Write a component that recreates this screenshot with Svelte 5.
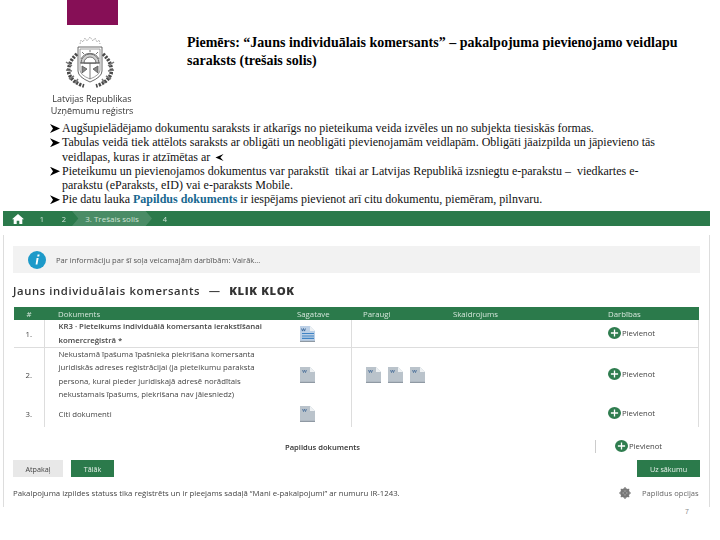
<script>
  const bullets = [
    { lines: ["Augšupielādējamo dokumentu saraksts ir atkarīgs no pieteikuma veida izvēles un no subjekta tiesiskās formas."] },
    { lines: ["Tabulas veidā tiek attēlots saraksts ar obligāti un neobligāti pievienojamām veidlapām. Obligāti jāaizpilda un jāpievieno tās", "veidlapas, kuras ir atzīmētas ar"], mark: true },
    { lines: ["Pieteikumu un pievienojamos dokumentus var parakstīt  tikai ar Latvijas Republikā izsniegtu e-parakstu –  viedkartes e-", "parakstu (eParaksts, eID) vai e-paraksts Mobile."] }
  ];

  const rows = [
    { n: "1.", doc: ["KR3 · Pieteikums individuālā komersanta ierakstīšanai", "komercreģistrā *"], bold: true, tpl: "blue", samples: 0 },
    { n: "2.", doc: ["Nekustamā īpašuma īpašnieka piekrišana komersanta", "juridiskās adreses reģistrācijai (ja pieteikumu paraksta", "persona, kurai pieder juridiskajā adresē norādītais", "nekustamais īpašums, piekrišana nav jāiesniedz)"], tpl: "gray", samples: 3 },
    { n: "3.", doc: ["Citi dokumenti"], tpl: "gray", samples: 0 }
  ];
</script>

{#snippet fileIcon(kind)}
  <svg class="file" viewBox="0 0 15 16">
    <path d="M0 0h10l5 5v11H0z" fill={kind === "blue" ? "#bcd0e6" : "#bac3cb"} />
    <path d="M10 0l5 5h-5z" fill="#eef1f3" />
    <path d="M0 15.4h15" stroke="#8f99a3" stroke-width="1.2" />
    {#if kind === "blue"}
      <path d="M2 7h12v1.1H2zM2 9.4h12v1.1H2zM2 11.8h12v1.1H2z" fill="#3f83c4" />
      <path d="M1.5 2.5l1 2.6 1-2.6 1 2.6 1-2.6" stroke="#2f5f94" fill="none" stroke-width=".8" />
    {:else}
      <path d="M2.5 3l1 2.6 1-2.6 1 2.6 1-2.6" stroke="#4a6f99" fill="none" stroke-width=".8" />
    {/if}
  </svg>
{/snippet}

{#snippet add()}
  <span class="add">
    <svg viewBox="0 0 13 12" width="13" height="12">
      <ellipse cx="6.5" cy="6" rx="6.5" ry="6" fill="#2f7d4f" />
      <path d="M6.5 2.4v7.2M2.9 6h7.2" stroke="#fff" stroke-width="1.3" />
    </svg>
    Pievienot
  </span>
{/snippet}

<div class="slide">
  <header>
    <div class="brand">
      <div class="tab"></div>
      <svg class="crest" viewBox="0 0 52 52" fill="none" stroke="#555" stroke-width=".8">
        <path d="M15 8l1-4 2 2 2-4 2 3 3-4 3 4 2-3 2 4 2-2 1 4" stroke="#999" stroke-dasharray="1.6 1" />
        <path d="M13 11h24v24q0 6-12 11q-12-5-12-11z" stroke="#444" />
        <path d="M15 13h20v21q0 5-10 9q-10-4-10-9z" stroke="#888" />
        <path d="M16 27a9 9 0 0 1 18 0z" fill="#cfcfcf" />
        <path d="M19 27a6 6 0 0 1 12 0z" fill="#fff" />
        <path d="M16 23a10 10 0 0 1 18 0M25 16v-2M19 18l-2-2M31 18l2-2" />
        <path d="M25 27v16M15 27h20" />
        <path d="M17 30l5 3-5 4zM33 30l-5 3 5 4z" fill="#888" />
        <path d="M12 18q-10 9-8 20q4 9 15 12M38 18q10 9 8 20q-4 9-15 12" stroke="#4a4a4a" stroke-width="3.6" stroke-dasharray="2.2 1.2" />
        <path d="M1 26l6 4M1 34l6 1M4 43l5-3M10 47l3-4M49 26l-6 4M49 34l-6 1M46 43l-5-3M40 47l-3-4" stroke="#777" stroke-width="1.5" />
      </svg>
      <div class="org">Latvijas Republikas<br />Uzņēmumu reģistrs</div>
    </div>
    <h1>Piemērs: “Jauns individuālais komersants” – pakalpojuma pievienojamo veidlapu saraksts (trešais solis)</h1>
  </header>

  <ul>
    {#each bullets as b}
      <li>
        {#each b.lines as line, i}
          <span class="line">{line}{#if b.mark && i === b.lines.length - 1}<svg class="mark" viewBox="0 0 10 9"><path d="M9.5 0.5L0.5 4.5l9 4-3.5-4z" fill="#000" /></svg>{/if}</span>
        {/each}
      </li>
    {/each}
    <li><span class="line">Pie datu lauka <b>Papildus dokuments</b> ir iespējams pievienot arī citu dokumentu, piemēram, pilnvaru.</span></li>
  </ul>

  <div class="app">
    <nav>
      <svg viewBox="0 0 12 10" width="12" height="10"><path d="M6 0L0 5.2h1.7V10h3V6.8h2.6V10h3V5.2H12z" fill="#fff" /></svg>
      <span class="step">1</span>
      <span class="step">2</span>
      <span class="step current">3. Trešais solis</span>
      <span class="step">4</span>
    </nav>

    <div class="panel">
      <div class="info">
        <svg viewBox="0 0 18 18" width="18" height="18">
          <circle cx="9" cy="9" r="9" fill="#1d9ac9" />
          <path d="M9.6 3.6h2l-.4 2h-2zM8.6 7h2L9.4 13.6H7.6z" fill="#fff" />
        </svg>
        <span>Par informāciju par šī soļa veicamajām darbībām: Vairāk...</span>
      </div>

      <h2>Jauns individuālais komersants <span class="dash">—</span> <b>KLIK KLOK</b></h2>

      <table>
        <thead>
          <tr>
            <th class="num">#</th>
            <th>Dokuments</th>
            <th>Sagatave</th>
            <th>Paraugi</th>
            <th>Skaidrojums</th>
            <th>Darbības</th>
          </tr>
        </thead>
        <tbody>
          {#each rows as r}
            <tr>
              <td class="num">{r.n}</td>
              <td class="doc" class:bold={r.bold}>
                {#each r.doc as line}<div>{line}</div>{/each}
              </td>
              <td class="tpl">{@render fileIcon(r.tpl)}</td>
              <td class="samples">
                {#each Array(r.samples) as _}{@render fileIcon("gray")}{/each}
              </td>
              <td></td>
              <td class="act">{@render add()}</td>
            </tr>
          {/each}
        </tbody>
      </table>

      <div class="extra">
        <span class="extra-label">Papildus dokuments</span>
        <span class="extra-add">{@render add()}</span>
      </div>

      <div class="buttons">
        <button class="back">Atpakaļ</button>
        <button class="go">Tālāk</button>
        <button class="go home">Uz sākumu</button>
      </div>

      <div class="foot">
        <span>Pakalpojuma izpildes statuss tika reģistrēts un ir pieejams sadaļā “Mani e-pakalpojumi” ar numuru IR-1243.</span>
        <svg viewBox="0 0 12 12" width="12" height="12">
          <circle cx="6" cy="6" r="3.6" fill="none" stroke="#777" stroke-width="2.4" />
          <path d="M6 0v12M0 6h12M1.8 1.8l8.4 8.4M10.2 1.8l-8.4 8.4" stroke="#777" stroke-width="1.2" />
        </svg>
        <span class="opts">Papildus opcijas</span>
      </div>
    </div>
  </div>

  <div class="page">7</div>
</div>

<style>
  :global(body) {
    background: #fff;
  }

  .slide {
    width: 720px;
    height: 540px;
    overflow: hidden;
    font-family: "Liberation Serif", serif;
    color: #111;
  }

  header {
    display: flex;
    height: 120px;
  }

  .brand {
    width: 187px;
    flex: none;
    padding-left: 50px;
    box-sizing: border-box;
    display: flex;
    flex-direction: column;
    align-items: flex-start;
  }

  .tab {
    width: 51px;
    height: 25px;
    margin-left: 17px;
    background: #860f56;
  }

  .crest {
    width: 52px;
    height: 52px;
    margin: 11px 0 0 15px;
    filter: blur(0.4px);
  }

  .org {
    margin-top: 5px;
    width: 84px;
    text-align: center;
    white-space: nowrap;
    font: 9px/11.5px "Open Sans", sans-serif;
    color: #333;
    filter: blur(0.3px);
  }

  h1 {
    margin: 34px 0 0;
    width: 495px;
    font-size: 14px;
    line-height: 18px;
    font-weight: bold;
    color: #000;
  }

  ul {
    list-style: none;
    margin: 0;
    padding: 1px 0 0 62px;
    height: 90px;
    font-size: 12px;
    line-height: 14.25px;
    color: #111;
  }

  li {
    position: relative;
  }

  li::before {
    content: "";
    position: absolute;
    left: -12px;
    top: 3px;
    width: 10px;
    height: 9px;
    background: #000;
    clip-path: polygon(0 0, 100% 50%, 0 100%, 30% 50%);
  }

  .line {
    display: block;
    white-space: pre;
  }

  li b {
    color: #17678f;
  }

  .mark {
    width: 9px;
    height: 9px;
    margin-left: 5px;
    vertical-align: -1px;
  }

  .app {
    width: 707px;
    margin-left: 3px;
    font-family: "Open Sans", sans-serif;
    filter: blur(0.45px);
  }

  nav {
    height: 15px;
    background: #2b7a4b;
    display: flex;
    align-items: center;
    padding-left: 9px;
    color: #cfe3d6;
    font-size: 7.5px;
  }

  .step {
    width: 22px;
    text-align: center;
  }

  .step:first-of-type {
    margin-left: 7px;
  }

  .current {
    width: 80px;
    height: 15px;
    line-height: 15px;
    margin: 0 2px 0 -3px;
    font-size: 8px;
    background: #4a8c66;
    clip-path: polygon(0 0, 92% 0, 100% 50%, 92% 100%, 0 100%, 8% 50%);
  }

  .panel {
    margin-top: 9px;
    height: 272px;
    padding: 11px 9px 0 9px;
    box-sizing: border-box;
    border-left: 1px solid #ddd;
    border-right: 1px solid #ddd;
  }

  .info {
    height: 27px;
    background: #f2f2f2;
    display: flex;
    align-items: center;
    gap: 10px;
    padding-left: 15px;
    font-size: 7.6px;
    color: #555;
  }

  h2 {
    margin: 10px 0 9px;
    font-size: 11.3px;
    line-height: 15px;
    font-weight: 600;
    letter-spacing: 0.6px;
    color: #333;
  }

  h2 .dash {
    margin: 0 5px;
  }

  table {
    width: 685px;
    margin-left: 1px;
    table-layout: fixed;
    border-collapse: collapse;
    font-size: 7.8px;
    color: #444;
  }

  th {
    height: 13px;
    padding: 0;
    background: #2b7a4b;
    color: #d5e6db;
    font-weight: 500;
    font-size: 7.8px;
    text-align: left;
    box-sizing: border-box;
  }

  th:nth-child(1) { width: 30px; }
  th:nth-child(2) { width: 252px; padding-left: 14px; }
  th:nth-child(3) { width: 55px; padding-left: 1px; }
  th:nth-child(4) { width: 102px; padding-left: 12px; }
  th:nth-child(5) { width: 155px; }

  td {
    padding: 0;
    vertical-align: middle;
  }

  tbody tr:first-child td {
    height: 27px;
    border-bottom: 1px solid #ddd;
  }

  tbody tr:nth-child(2) td {
    height: 53px;
  }

  tbody tr:nth-child(3) td {
    height: 26px;
  }

  .num {
    text-align: center;
    border-right: 1px solid #ddd;
  }

  th.num {
    border: none;
  }

  .doc {
    padding-left: 14px;
    line-height: 13.3px;
    white-space: nowrap;
  }

  .bold {
    font-weight: 600;
  }

  .tpl {
    border-right: 1px solid #ddd;
    padding-left: 4px;
  }

  .file {
    display: inline-block;
    width: 15px;
    height: 16px;
    vertical-align: middle;
  }

  .samples {
    padding-left: 14px;
    white-space: nowrap;
  }

  .samples .file {
    margin-right: 7px;
  }

  .act {
    border-right: 1px solid #ddd;
  }

  .add {
    display: inline-flex;
    align-items: center;
    gap: 1px;
    font-size: 7.7px;
    color: #444;
  }

  .extra {
    display: flex;
    align-items: center;
    height: 13px;
    margin-top: 13px;
    font-size: 7.6px;
    color: #333;
  }

  .extra-label {
    margin-left: 272px;
    width: 310px;
    flex: none;
    font-weight: 600;
  }

  .extra-add {
    padding-left: 19px;
    height: 13px;
    border-left: 1px solid #ccc;
  }

  .buttons {
    display: flex;
    gap: 8px;
    margin-top: 7px;
  }

  button {
    height: 17px;
    border: none;
    padding: 0;
    font: 500 7.2px "Open Sans", sans-serif;
  }

  .back {
    width: 50px;
    background: #e8e8e8;
    color: #444;
  }

  .go {
    width: 43px;
    background: #2b7a4b;
    color: #e8f1eb;
  }

  .home {
    width: 63px;
    margin-left: auto;
  }

  .foot {
    display: flex;
    align-items: center;
    margin-top: 9px;
    height: 13px;
    font-size: 7.8px;
    color: #444;
    white-space: nowrap;
  }

  .foot span:first-child {
    flex: 1;
  }

  .opts {
    margin-left: 11px;
    width: 58px;
    font-size: 7.6px;
    color: #666;
  }

  .page {
    width: 689px;
    text-align: right;
    margin-top: 1px;
    font: 7px "Liberation Sans", sans-serif;
    color: #888;
  }
</style>
